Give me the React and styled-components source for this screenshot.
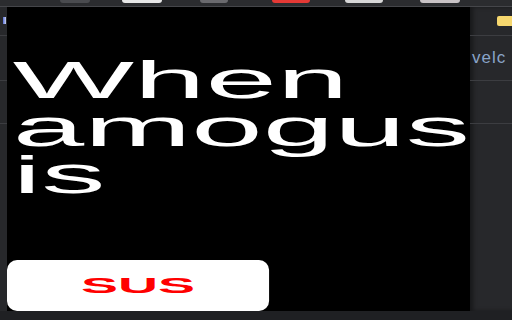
import styled, { createGlobalStyle } from "styled-components";

const GlobalStyle = createGlobalStyle`
  html, body {
    margin: 0;
    padding: 0;
    background: #1f2023;
    overflow: hidden;
  }
  body {
    font-family: "Liberation Sans", Arial, sans-serif;
  }
`;

const tabs = [
  { left: 60, w: 30, color: "#4a4b4f" },
  { left: 32, w: 40, color: "#e8e8e8" },
  { left: 38, w: 28, color: "#6a6a6e" },
  { left: 44, w: 38, color: "#e53935" },
  { left: 35, w: 38, color: "#d8d8d8" },
  { left: 37, w: 40, color: "#c9c3c6" },
];

export default function App() {
  return (
    <>
      <GlobalStyle />
      <Screen>
        <TabStrip>
          {tabs.map((t, i) => (
            <TabBlob key={i} $left={t.left} $w={t.w} $color={t.color} />
          ))}
        </TabStrip>
        <Main>
          <SideStrip>
            <Mark />
            <Divider $after={44} />
            <Divider $after={42} />
            <Divider />
          </SideStrip>
          <Popup>
            <Stretch>
              <Headline>
                When
                <br />
                amogus
                <br />
                is
              </Headline>
              <SusButton>SUS</SusButton>
            </Stretch>
          </Popup>
          <Backdrop>
            <FolderRow>
              <Folder />
            </FolderRow>
            <Divider />
            <LinkRow>velc</LinkRow>
            <Divider $after={42} />
            <Divider />
          </Backdrop>
        </Main>
      </Screen>
    </>
  );
}

const Screen = styled.div`
  width: 512px;
  height: 320px;
  display: flex;
  flex-direction: column;
`;

const TabStrip = styled.div`
  height: 6px;
  background: #2b2c2f;
  border-bottom: 1px solid #45464a;
  display: flex;
  align-items: flex-start;
  overflow: hidden;
`;

const TabBlob = styled.div`
  flex-shrink: 0;
  margin-left: ${(p) => p.$left}px;
  width: ${(p) => p.$w}px;
  height: 3px;
  background: ${(p) => p.$color};
  border-radius: 0 0 4px 4px;
`;

const Main = styled.div`
  display: flex;
  height: 304px;
`;

const SideStrip = styled.div`
  flex-shrink: 0;
  width: 7px;
  background: #27282b;
  display: flex;
  flex-direction: column;
`;

const Mark = styled.div`
  width: 3px;
  height: 7px;
  margin: 10px 0 11px 3px;
  background: linear-gradient(90deg, #5a6fd8, #c9d3f0);
`;

const Divider = styled.div`
  flex-shrink: 0;
  height: 1px;
  background: #3c3d41;
  margin-bottom: ${(p) => p.$after || 0}px;
`;

const Popup = styled.div`
  flex-shrink: 0;
  width: 463px;
  height: 304px;
  background: #000;
  overflow: hidden;
`;

const Stretch = styled.div`
  width: 183px;
  height: 304px;
  transform: scaleX(2.52);
  transform-origin: left top;
  display: flex;
  flex-direction: column;
`;

const Headline = styled.h1`
  margin: 0;
  padding: 50px 0 0 2.3px;
  font-family: "Liberation Sans", Arial, sans-serif;
  font-weight: 400;
  font-size: 51px;
  line-height: 47.5px;
  color: #fff;
  white-space: nowrap;
`;

const SusButton = styled.button`
  margin-top: auto;
  width: 104px;
  height: 51px;
  border: none;
  border-radius: 4px / 10px;
  background: #fff;
  color: #ff0000;
  font-family: "Liberation Sans", Arial, sans-serif;
  font-weight: 700;
  font-size: 22px;
  padding: 0;
`;

const Backdrop = styled.div`
  flex: 1;
  min-width: 0;
  background: #27282b;
  display: flex;
  flex-direction: column;
  box-shadow: inset 3px 0 4px rgba(0, 0, 0, 0.4);
`;

const FolderRow = styled.div`
  height: 28px;
  display: flex;
  justify-content: flex-end;
  align-items: flex-start;
  padding-top: 9px;
  box-sizing: border-box;
`;

const Folder = styled.div`
  width: 15px;
  height: 10px;
  background: #f6d76e;
  border-radius: 2px 0 0 2px;
`;

const LinkRow = styled.div`
  height: 44px;
  padding: 13px 0 0 2px;
  font-family: "Liberation Sans", Arial, sans-serif;
  font-size: 17px;
  line-height: 17px;
  letter-spacing: 1px;
  color: #8aa4c8;
  white-space: nowrap;
  overflow: hidden;
  box-sizing: border-box;
`;
